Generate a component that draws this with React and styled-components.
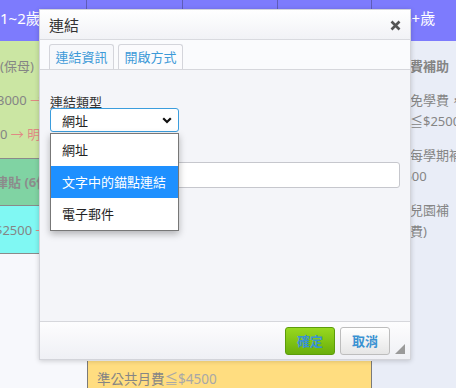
import React from 'react';
import styled, { createGlobalStyle } from 'styled-components';

const GlobalStyle = createGlobalStyle`
  html, body {
    margin: 0;
    padding: 0;
    background: #f7f8fc;
    overflow: hidden;
  }
  body {
    font-family: "Noto Sans", "Noto Sans CJK TC", sans-serif;
  }
`

const Page = styled.div`
  position: relative;
  width: 456px;
  height: 388px;
  overflow: hidden;
`

const Table = styled.div`
  display: grid;
  grid-template-columns: 95px 96px 95px 94px 95px;
  grid-template-rows: 41px 347px;
  margin-left: -8px;
  width: 475px;
`

const HeadCell = styled.div`
  background: #7d7bfd;
  border-right: 1px solid #5f5db8;
  color: white;
  font-size: 15px;
  line-height: 36px;
  padding-left: ${ props => props.$pad || 0 }px;
  white-space: nowrap;
`

const FirstCol = styled.div`
  display: flex;
  flex-direction: column;
`

const Cell = styled.div`
  background: ${ props => props.$bg };
  height: ${ props => props.$h }px;
  border-bottom: 1px solid #8a8a8a;
  box-sizing: border-box;
  display: flex;
  flex-direction: column;
  justify-content: ${ props => props.$center ? 'center' : 'flex-start' };
  gap: 14px;
  padding: ${ props => props.$center ? '0' : '15px' } 0 0 ${ props => props.$indent ?? 7 }px;
  color: #858585;
  font-size: 13px;
  line-height: 20px;
  white-space: nowrap;
`

const Line = styled.span`
  margin-left: ${ props => props.$shift || 0 }px;
`

const Strong = styled.span`
  font-weight: 700;
  color: #8c8c8c;
`

const Arrow = styled.span`
  color: #e08a84;
`

const MidCol = styled.div`
  grid-column: 2 / span 3;
  display: flex;
  flex-direction: column;
  justify-content: flex-end;
`

const YellowCell = styled.div`
  height: 27px;
  background: #ffdd80;
  border-left: 1px solid #7a7a7a;
  border-right: 1px solid #7a7a7a;
  padding-left: 9px;
  color: #858585;
  font-size: 13.5px;
  line-height: 36px;
  white-space: nowrap;
`

const Light = styled.span`
  color: #a8a8a8;
`

const LastCol = styled.div`
  background: #e9edf7;
  padding: 15px 0 0 25px;
  display: flex;
  flex-direction: column;
  gap: 13px;
  color: #858585;
  font-size: 13px;
  line-height: 21px;
  white-space: nowrap;
`

const Para = styled.div`
  font-weight: ${ props => props.$bold ? 700 : 400 };
`

/* dialog */

const Dialog = styled.div`
  position: absolute;
  left: 39px;
  top: 9px;
  width: 370px;
  height: 349px;
  border: 1px solid #d3d4da;
  background: #f4f5f9;
  box-shadow: 0 1px 5px rgba(0, 0, 0, 0.18);
  display: flex;
  flex-direction: column;
  font-family: "Noto Sans", "Noto Sans CJK TC", sans-serif;
`

const TitleBar = styled.div`
  height: 29px;
  display: flex;
  align-items: center;
  justify-content: space-between;
  padding: 0 9px 0 9px;
  background: linear-gradient(#ffffff, #f1f2f6);
  border-bottom: 1px solid #d9dadf;
  color: #333;
  font-size: 15px;
`

const Close = styled.svg`
  width: 11px;
  height: 11px;
  margin-top: 1px;
`

const TabBar = styled.div`
  height: 25px;
  padding: 4px 0 0 9px;
  display: flex;
  gap: 4px;
  background: #fafbfd;
  border-bottom: 1px solid #d6d7dc;
`

const Tab = styled.div`
  width: 63px;
  height: 24px;
  border: 1px solid #d4d5db;
  border-bottom: none;
  border-radius: 3px 3px 0 0;
  background: ${ props => props.$active ? '#f7f8fb' : '#fbfbfd' };
  color: #3d9ad8;
  font-size: 13px;
  line-height: 25px;
  text-align: center;
`

const Body = styled.div`
  flex: 1;
  padding: 26px 10px 0 10px;
  display: flex;
  flex-direction: column;
`

const Label = styled.div`
  color: #333;
  font-size: 13px;
  line-height: 13px;
  margin-top: ${ props => props.$top || 0 }px;
  margin-bottom: ${ props => props.$bottom || 0 }px;
`

const SelectWrap = styled.div`
  position: relative;
  width: 129px;
`

const Select = styled.div`
  height: 22px;
  border: 1px solid #3b9ddd;
  border-radius: 3px;
  background: white;
  display: flex;
  align-items: center;
  justify-content: space-between;
  padding: 0 6px 0 11px;
  color: #222;
  font-size: 13px;
`

const Menu = styled.div`
  position: absolute;
  left: 0;
  top: 25px;
  width: 127px;
  border: 1px solid #777;
  background: white;
  box-shadow: 0 3px 7px rgba(0, 0, 0, 0.28);
  z-index: 2;
`

const Option = styled.div`
  height: 32px;
  line-height: 32px;
  padding-left: 11px;
  font-size: 13px;
  color: ${ props => props.$selected ? 'white' : '#222' };
  background: ${ props => props.$selected ? '#1e90ff' : 'white' };
  white-space: nowrap;
`

const Input = styled.div`
  height: 24px;
  border: 1px solid #c6c7cd;
  border-radius: 3px;
  background: white;
`

const Footer = styled.div`
  position: relative;
  height: 38px;
  border-top: 1px solid #d6d7dc;
  background: linear-gradient(#fdfdfe, #eff0f5);
  display: flex;
  justify-content: flex-end;
  align-items: flex-start;
  gap: 5px;
  padding: 5px 20px 0 0;
  box-sizing: border-box;
`

const Button = styled.div`
  width: 48px;
  height: 26px;
  border: 1px solid ${ props => props.$primary ? '#5c9c0a' : '#bdbdbd' };
  border-radius: 3px;
  background: ${ props => props.$primary
    ? 'linear-gradient(#97d81f, #6aaf0b)'
    : 'linear-gradient(#ffffff, #e6e6e6)' };
  color: #3a92d2;
  font-size: 13px;
  font-weight: 700;
  line-height: 26px;
  text-align: center;
`

const Grip = styled.svg`
  position: absolute;
  right: 5px;
  bottom: 5px;
  width: 10px;
  height: 10px;
`

function LinkDialog() {
  return (
    <Dialog>
      <TitleBar>
        <span>連結</span>
        <Close viewBox="0 0 11 11">
          <path d="M1.5 1.5 L9.5 9.5 M9.5 1.5 L1.5 9.5" stroke="#555" strokeWidth="2.6" />
        </Close>
      </TitleBar>
      <TabBar>
        <Tab $active>連結資訊</Tab>
        <Tab>開啟方式</Tab>
      </TabBar>
      <Body>
        <Label $bottom={-1}>連結類型</Label>
        <SelectWrap>
          <Select>
            <span>網址</span>
            <svg width="10" height="7" viewBox="0 0 10 7">
              <polyline points="1.2,1.2 5,5 8.8,1.2" fill="none" stroke="#111" strokeWidth="2.2" />
            </svg>
          </Select>
          <Menu>
            <Option>網址</Option>
            <Option $selected>文字中的錨點連結</Option>
            <Option>電子郵件</Option>
          </Menu>
        </SelectWrap>
        <Label $top={10} $bottom={7}>網址</Label>
        <Input />
      </Body>
      <Footer>
        <Button $primary>確定</Button>
        <Button>取消</Button>
        <Grip viewBox="0 0 10 10">
          <polygon points="10,0 10,10 0,10" fill="#9a9a9a" />
        </Grip>
      </Footer>
    </Dialog>
  )
}

export default function App() {
  return (
    <Page>
      <GlobalStyle />
      <Table>
        <HeadCell $pad={8}>1~2歲</HeadCell>
        <HeadCell />
        <HeadCell />
        <HeadCell />
        <HeadCell $pad={31}>6+歲</HeadCell>

        <FirstCol>
          <Cell $bg="#cbe6a3" $h={118} $indent={8}>
            <Line>(保母)</Line>
            <Line $shift={-3}>3000 <Arrow>→ 明年</Arrow></Line>
            <Line>0 <Arrow>→ 明年</Arrow></Line>
          </Cell>
          <Cell $bg="#80d3a3" $h={47} $indent={3} $center>
            <Strong>津貼 (6個月)</Strong>
          </Cell>
          <Cell $bg="#80f8f3" $h={48} $indent={3} $center>
            <Line>$2500 <Arrow>→</Arrow></Line>
          </Cell>
        </FirstCol>

        <MidCol>
          <YellowCell>準公共月費<Light>≦$4500</Light></YellowCell>
        </MidCol>

        <LastCol>
          <Para $bold>學費補助</Para>
          <Para>，免學費，<br />月≦$2500</Para>
          <Para>，每學期補<br />1500</Para>
          <Para>幼兒園補<br />學費)</Para>
        </LastCol>
      </Table>
      <LinkDialog />
    </Page>
  )
}
